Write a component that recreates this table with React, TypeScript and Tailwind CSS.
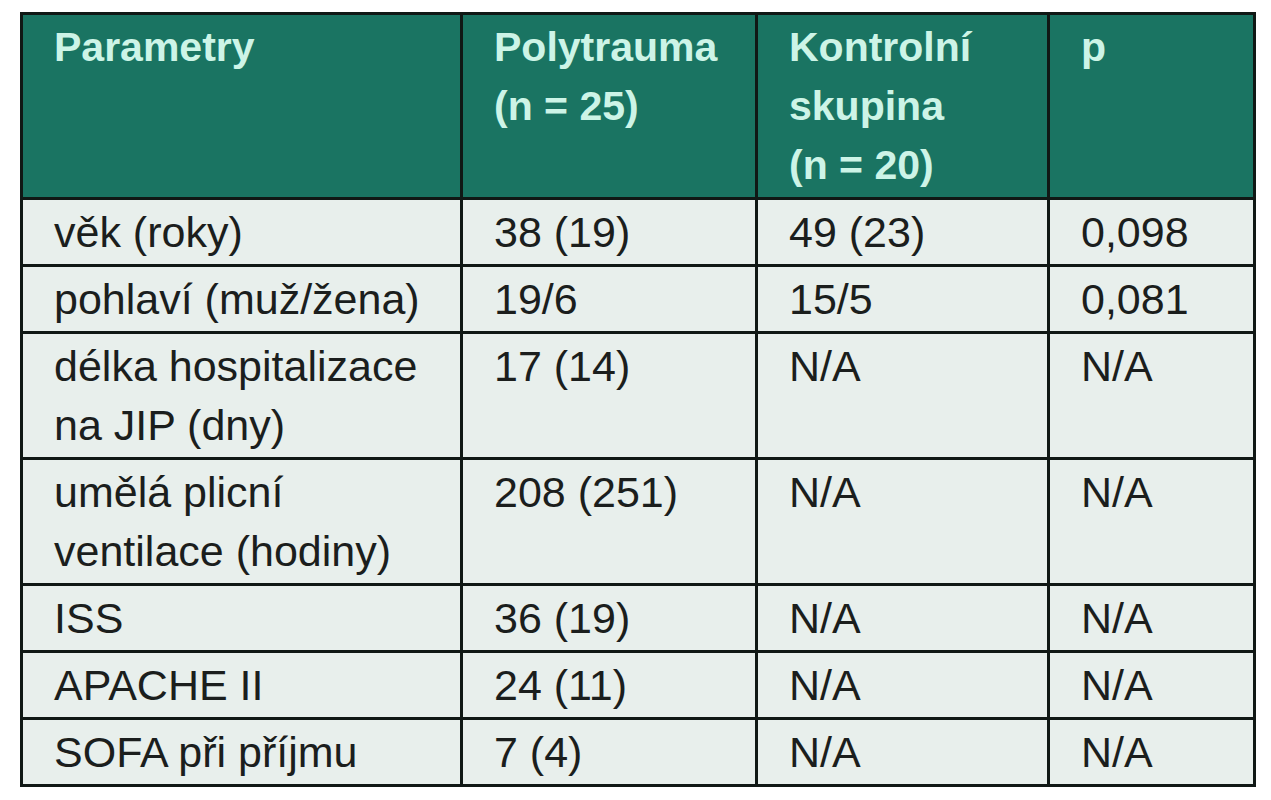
const rows: { label: string[]; poly: string; ctrl: string; p: string }[] = [
  { label: ["věk (roky)"], poly: "38 (19)", ctrl: "49 (23)", p: "0,098" },
  { label: ["pohlaví (muž/žena)"], poly: "19/6", ctrl: "15/5", p: "0,081" },
  { label: ["délka hospitalizace", "na JIP (dny)"], poly: "17 (14)", ctrl: "N/A", p: "N/A" },
  { label: ["umělá plicní", "ventilace (hodiny)"], poly: "208 (251)", ctrl: "N/A", p: "N/A" },
  { label: ["ISS"], poly: "36 (19)", ctrl: "N/A", p: "N/A" },
  { label: ["APACHE II"], poly: "24 (11)", ctrl: "N/A", p: "N/A" },
  { label: ["SOFA při příjmu"], poly: "7 (4)", ctrl: "N/A", p: "N/A" },
];

const th = "border-[3px] border-[#101815] align-top text-left font-bold text-[41px] pl-[31px] pr-1 pt-[3px] pb-[2px] whitespace-nowrap";
const td = "border-[3px] border-[#101815] align-top text-left pl-[31px] pr-1 pt-[3px] pb-[2px] whitespace-nowrap";

export default function App() {
  return (
    <div className="w-[1271px] h-[800px] bg-white pt-[12px] pl-[20px]">
      <table
        className="table-fixed border-collapse text-[43px] leading-[59px]"
        style={{ fontFamily: '"Liberation Sans", Arial, sans-serif' }}
      >
        <colgroup>
          <col className="w-[440px]" />
          <col className="w-[295px]" />
          <col className="w-[292px]" />
          <col className="w-[206px]" />
        </colgroup>
        <thead>
          <tr className="bg-[#1a7462] text-[#cdf4e7]">
            <th className={th}>Parametry</th>
            <th className={th}>
              Polytrauma
              <br />
              (n = 25)
            </th>
            <th className={th}>
              Kontrolní
              <br />
              skupina
              <br />
              (n = 20)
            </th>
            <th className={th}>p</th>
          </tr>
        </thead>
        <tbody className="bg-[#e8efec] text-[#1b1e1d]">
          {rows.map((r) => (
            <tr key={r.label.join(" ")}>
              <td className={td}>
                {r.label.map((l, i) => (
                  <div key={i}>{l}</div>
                ))}
              </td>
              <td className={td}>{r.poly}</td>
              <td className={td}>{r.ctrl}</td>
              <td className={td}>{r.p}</td>
            </tr>
          ))}
        </tbody>
      </table>
    </div>
  );
}
